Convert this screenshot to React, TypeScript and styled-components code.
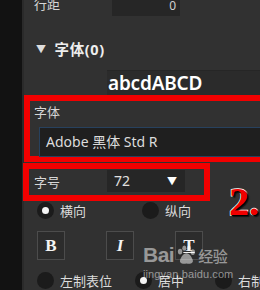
import styled, { createGlobalStyle } from 'styled-components';

const GlobalStyle = createGlobalStyle`
  html, body {
    margin: 0;
    padding: 0;
    background: #111;
  }
  body {
    font-family: 'Noto Sans', 'Noto Sans CJK SC', sans-serif;
  }
`;

export default function App() {
  return (
    <StyledFrame>
      <GlobalStyle />
      <StyledSideStrip />
      <StyledPanel>
        <StyledRow $height={26}>
          <StyledLabel>行距</StyledLabel>
          <StyledNumberBox>0</StyledNumberBox>
        </StyledRow>

        <StyledSectionHeader>
          <span className='arrow'>▼</span>
          <span>字体(0)</span>
        </StyledSectionHeader>

        <StyledPreview>abcdABCD</StyledPreview>

        <StyledMarkBox>
          <StyledLabel>字体</StyledLabel>
          <StyledFontSelect>Adobe 黑体 Std R</StyledFontSelect>
        </StyledMarkBox>

        <StyledSizeBox>
          <StyledLabel>字号</StyledLabel>
          <StyledSizeSelect>
            <span>72</span>
            <span className='caret'>▼</span>
          </StyledSizeSelect>
        </StyledSizeBox>

        <StyledRadioRow $top={0}>
          <StyledRadio $checked $width={105}>
            <i />
            横向
          </StyledRadio>
          <StyledRadio $width={70}>
            <i />
            纵向
          </StyledRadio>
        </StyledRadioRow>

        <StyledButtonRow>
          <StyledStyleButton>B</StyledStyleButton>
          <StyledStyleButton $italic>I</StyledStyleButton>
          <StyledStyleButton $underline>T</StyledStyleButton>
        </StyledButtonRow>

        <StyledRadioRow $top={11}>
          <StyledRadio $width={98}>
            <i />
            左制表位
          </StyledRadio>
          <StyledRadio $checked $width={80}>
            <i />
            居中
          </StyledRadio>
          <StyledRadio $width={60}>
            <i />
            右制表位
          </StyledRadio>
        </StyledRadioRow>
      </StyledPanel>

      <StyledStepMark>2.</StyledStepMark>

      <StyledWatermark>
        <div className='brand'>
          <span>Bai</span>
          <svg width='22' height='22' viewBox='0 0 26 24'>
            <ellipse cx='6' cy='8' rx='2.6' ry='3.4' />
            <ellipse cx='11' cy='4' rx='2.4' ry='3.1' />
            <ellipse cx='16.5' cy='4' rx='2.4' ry='3.1' />
            <ellipse cx='21' cy='8.5' rx='2.6' ry='3.4' />
            <path d='M13.5 10 C9.5 10 7 15 6 18 C5 22 9 23 13.5 22 C18 23 22 22 21 18 C20 15 17.5 10 13.5 10 Z' />
          </svg>
          <span className='cn'>经验</span>
        </div>
        <div className='url'>jingyan.baidu.com</div>
      </StyledWatermark>
    </StyledFrame>
  );
}

const StyledFrame = styled.div`
  position: relative;
  width: 260px;
  height: 290px;
  overflow: hidden;
  display: flex;
  background: #111;
`;

const StyledSideStrip = styled.div`
  width: 22px;
  flex-shrink: 0;
  background: #121212;
  border-right: 2px solid #2a2a2a;
`;

const StyledPanel = styled.div`
  flex: 1;
  background: #313131;
  margin-top: -9px;
  display: flex;
  flex-direction: column;
  min-width: 0;
`;

interface RowProps {
  $height: number;
}

const StyledRow = styled.div<RowProps>`
  display: flex;
  align-items: center;
  height: ${(props) => props.$height}px;
  padding-left: 10px;
`;

const StyledLabel = styled.div`
  width: 73px;
  flex-shrink: 0;
  font-size: 13px;
  line-height: 18px;
  color: #d6d6d6;
  font-family: 'Noto Sans CJK SC', sans-serif;
`;

const StyledNumberBox = styled.div`
  align-self: stretch;
  width: 68px;
  margin-left: 5px;
  background: #262626;
  color: #cfcfcf;
  font-size: 12px;
  text-align: right;
  padding: 9px 4px 0 0;
  box-sizing: border-box;
  line-height: 12px;
`;

const StyledSectionHeader = styled.div`
  display: flex;
  align-items: center;
  gap: 8px;
  height: 55px;
  padding: 11px 0 0 12px;
  box-sizing: border-box;
  color: #eee;
  font-size: 14.5px;
  font-weight: 700;
  letter-spacing: 0.6px;
  font-family: 'Noto Sans', 'Noto Sans CJK SC', sans-serif;

  .arrow {
    font-size: 10px;
    color: #ddd;
  }
`;

const StyledPreview = styled.div`
  margin-left: 83px;
  height: 25px;
  background: #2b2b2b;
  border-top: 1px solid #262626;
  color: #fff;
  font-family: 'Noto Sans', sans-serif;
  font-weight: 600;
  font-size: 19px;
  letter-spacing: -0.2px;
  line-height: 25px;
  padding-left: 1px;
  white-space: nowrap;
  box-sizing: border-box;
`;

const StyledMarkBox = styled.div`
  border: 6px solid #f20000;
  border-right: none;
  height: 67px;
  box-sizing: border-box;
  padding: 2px 0 0 4px;
  display: flex;
  flex-direction: column;
  gap: 6px;
`;

const StyledFontSelect = styled.div`
  margin-left: 5px;
  height: 30px;
  background: #1f1f1f;
  border: 1px solid #27415e;
  border-right: none;
  box-sizing: border-box;
  color: #dcdcdc;
  font-size: 14px;
  line-height: 28px;
  padding-left: 6px;
  font-family: 'Noto Sans', 'Noto Sans CJK SC', sans-serif;
  white-space: nowrap;
`;

const StyledSizeBox = styled.div`
  margin: 1px 0 0 -1px;
  width: 187px;
  height: 39px;
  border: 6px solid #f20000;
  box-sizing: border-box;
  display: flex;
  align-items: center;
  padding-left: 5px;
`;

const StyledSizeSelect = styled.div`
  width: 78px;
  height: 22px;
  margin-top: -2px;
  background: #262626;
  display: flex;
  align-items: center;
  justify-content: space-between;
  padding: 0 8px 0 7px;
  box-sizing: border-box;
  color: #e0e0e0;
  font-size: 14px;

  .caret {
    font-size: 10px;
    color: #fff;
  }
`;

interface RadioRowProps {
  $top: number;
}

const StyledRadioRow = styled.div<RadioRowProps>`
  display: flex;
  align-items: center;
  height: 19px;
  margin-top: ${(props) => props.$top}px;
  padding-left: 13px;
`;

interface RadioProps {
  $checked?: boolean;
  $width: number;
}

const StyledRadio = styled.div<RadioProps>`
  display: flex;
  align-items: center;
  gap: 6px;
  width: ${(props) => props.$width}px;
  flex-shrink: 0;
  font-size: 13px;
  color: #dcdcdc;
  font-family: 'Noto Sans CJK SC', sans-serif;
  white-space: nowrap;

  i {
    width: 17px;
    height: 17px;
    border-radius: 50%;
    background: #1b1b1b;
    flex-shrink: 0;
    display: flex;
    align-items: center;
    justify-content: center;

    &::after {
      content: '';
      width: 7px;
      height: 7px;
      border-radius: 50%;
      background: ${(props) => (props.$checked ? '#f4f4f4' : 'transparent')};
    }
  }
`;

const StyledButtonRow = styled.div`
  display: flex;
  gap: 41px;
  padding-left: 13px;
  margin-top: 11px;
`;

interface StyleButtonProps {
  $italic?: boolean;
  $underline?: boolean;
}

const StyledStyleButton = styled.div<StyleButtonProps>`
  width: 28px;
  height: 29px;
  box-sizing: border-box;
  border: 1px solid #4c4c4c;
  background: #2c2c2c;
  display: flex;
  align-items: center;
  justify-content: center;
  color: #f4f4f4;
  font-family: 'Liberation Serif', serif;
  font-weight: 700;
  font-size: 17px;
  font-style: ${(props) => (props.$italic ? 'italic' : 'normal')};
  text-decoration: ${(props) => (props.$underline ? 'underline' : 'none')};
`;

const StyledStepMark = styled.div`
  position: absolute;
  left: 229px;
  top: 182px;
  font-family: 'Liberation Serif', serif;
  font-weight: 700;
  font-size: 40px;
  line-height: 40px;
  color: #f00000;
  -webkit-text-stroke: 1.5px #fff;
  paint-order: stroke fill;
  text-shadow: 1px 1px 0 #000, 2px 2px 1px #111;
`;

const StyledWatermark = styled.div`
  position: absolute;
  left: 143px;
  top: 243px;
  color: rgba(255, 255, 255, 0.5);
  pointer-events: none;

  .brand {
    display: flex;
    align-items: center;
    height: 24px;
    font-family: 'Liberation Sans', sans-serif;
    font-weight: 700;
    font-size: 21px;
    letter-spacing: -0.5px;

    svg {
      fill: rgba(255, 255, 255, 0.5);
      margin: 0 1px;
    }

    .cn {
      font-family: 'Noto Sans CJK SC', sans-serif;
      font-size: 15px;
      font-weight: 500;
    }
  }

  .url {
    margin-top: 1px;
    font-family: 'Liberation Sans', sans-serif;
    font-size: 11px;
    letter-spacing: 0.1px;
  }
`;
